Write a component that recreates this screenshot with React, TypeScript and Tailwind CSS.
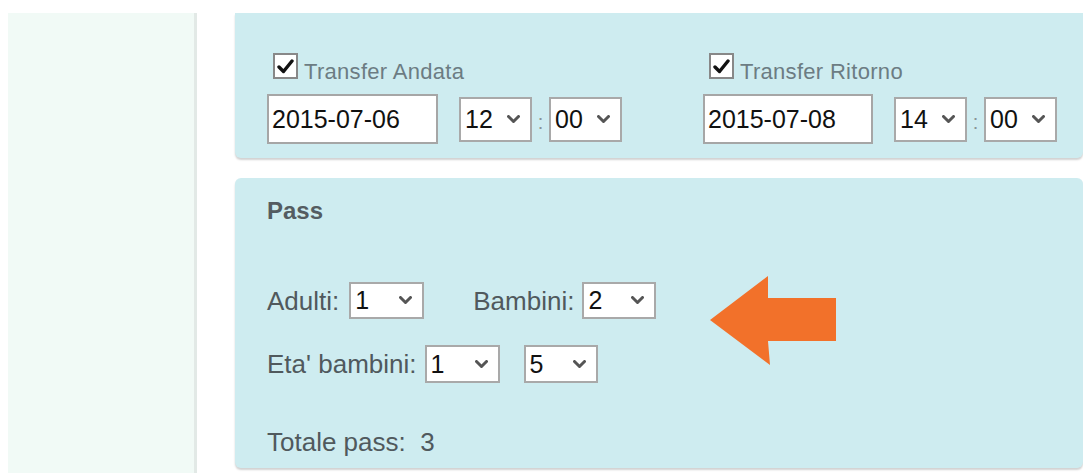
import React from "react";

const FONT = "font-['Liberation_Sans',Arial,sans-serif]";

function Chevron() {
  return (
    <svg width="13" height="9" viewBox="0 0 13 9" className="shrink-0">
      <path d="M1.5 1.5 L6.5 6.5 L11.5 1.5" fill="none" stroke="#555" strokeWidth="3" strokeLinecap="round" strokeLinejoin="round" />
    </svg>
  );
}

function FakeSelect({ value, w, h }: { value: string; w: string; h: string }) {
  return (
    <div className={`${w} ${h} flex items-center justify-between bg-white border-2 border-[#a9a9a9] pl-[4px] pr-[10px] text-[25px] leading-none text-[#111]`}>
      <span>{value}</span>
      <Chevron />
    </div>
  );
}

function CheckBox() {
  return (
    <div className="w-[25px] h-[26px] border-2 border-[#888] bg-white flex items-center justify-center">
      <svg width="17" height="15" viewBox="0 0 17 15">
        <path d="M2 8 L6.5 12.5 L15 2" fill="none" stroke="#111" strokeWidth="3.4" strokeLinecap="round" strokeLinejoin="round" />
      </svg>
    </div>
  );
}

function TransferGroup({ label, date, hour, minute, inputW }: { label: string; date: string; hour: string; minute: string; inputW: string }) {
  return (
    <div className="flex flex-col">
      <div className="flex items-end ml-[6px] h-[26px]">
        <CheckBox />
        <span className="ml-[6px] text-[22px] leading-[22px] text-[#6c7c83] tracking-[0.3px] mb-[-4px]">{label}</span>
      </div>
      <div className="flex items-center mt-[15px]">
        <div className={`${inputW} h-[50px] bg-white border-2 border-[#a6a6a6] pl-[3px] flex items-center text-[25px] leading-none text-[#111]`}>
          {date}
        </div>
        <div className="ml-[21px]">
          <FakeSelect value={hour} w="w-[73px]" h="h-[45px]" />
        </div>
        <span className="w-[17px] text-center text-[20px] text-[#8a9598] pt-[6px]">:</span>
        <FakeSelect value={minute} w="w-[73px]" h="h-[45px]" />
      </div>
    </div>
  );
}

export default function App() {
  return (
    <div className={`${FONT} w-[1083px] h-[473px] overflow-hidden bg-white flex pt-[13px]`}>
      {/* left column */}
      <aside className="ml-[8px] w-[189px] self-stretch bg-[#f1faf6] border-r-[3px] border-[#e2e9e6]" />

      <main className="ml-[38px] flex-1 flex flex-col">
        {/* transfer panel */}
        <section className="h-[145px] bg-[#ceecf0] rounded-b-[6px] shadow-[0_2px_2px_rgba(0,0,0,0.18)] pl-[32px] pt-[40px] flex">
          <TransferGroup label="Transfer Andata" date="2015-07-06" hour="12" minute="00" inputW="w-[171px]" />
          <div className="ml-[81px]">
            <TransferGroup label="Transfer Ritorno" date="2015-07-08" hour="14" minute="00" inputW="w-[170px]" />
          </div>
        </section>

        {/* pass panel */}
        <section className="relative mt-[20px] h-[290px] bg-[#ceecf0] rounded-[6px] shadow-[0_2px_2px_rgba(0,0,0,0.18)] pl-[32px] pt-[21px] text-[#50595d]">
          <h2 className="text-[24px] leading-[24px] font-bold text-[#545c61]">Pass</h2>

          <div className="flex items-center mt-[59px] text-[26px] leading-[26px]">
            <span>Adulti:</span>
            <div className="ml-[10px]">
              <FakeSelect value="1" w="w-[75px]" h="h-[37px]" />
            </div>
            <span className="ml-[49px]">Bambini:</span>
            <div className="ml-[8px]">
              <FakeSelect value="2" w="w-[74px]" h="h-[37px]" />
            </div>
          </div>

          <div className="flex items-center mt-[26px] text-[26px] leading-[26px]">
            <span>Eta' bambini:</span>
            <div className="ml-[8px]">
              <FakeSelect value="1" w="w-[75px]" h="h-[38px]" />
            </div>
            <div className="ml-[24px]">
              <FakeSelect value="5" w="w-[74px]" h="h-[38px]" />
            </div>
          </div>

          <p className="mt-[46px] text-[26px] leading-[26px]">Totale pass:&nbsp; 3</p>

          {/* pointer arrow */}
          <svg className="absolute left-[475px] top-[98px]" width="128" height="90" viewBox="0 0 128 90">
            <polygon points="0,44 58,0 58,22 126,22 126,65 58,65 60,89" fill="#f2712a" />
          </svg>
        </section>
      </main>
    </div>
  );
}
